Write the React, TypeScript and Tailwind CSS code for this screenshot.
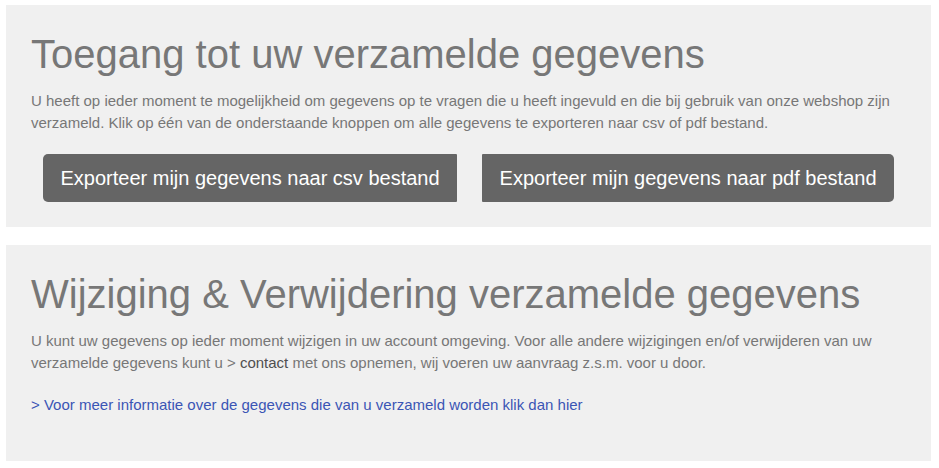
export default function App() {
  return (
    <main className="flex flex-col gap-[18px] bg-white pt-[5px] pr-2 pb-[7px] pl-[6px] font-['Liberation_Sans',Arial,sans-serif] text-[15px] leading-[22px] text-[#777777]">
      <section className="bg-[#f0f0f0] p-[25px]">
        <h1 className="text-[40px] leading-[48px]">Toegang tot uw verzamelde gegevens</h1>
        <p className="mt-3">
          U heeft op ieder moment te mogelijkheid om gegevens op te vragen die u heeft ingevuld en die bij gebruik van onze webshop zijn verzameld. Klik op één van de onderstaande knoppen om alle gegevens te exporteren naar csv of pdf bestand.
        </p>
        <div className="mt-5 flex flex-wrap gap-x-[25px] gap-y-3 px-3">
          <button type="button" className="min-h-12 grow rounded-l-[5px] rounded-r-[1px] bg-[#656565] px-4 text-[20px] text-white">
            Exporteer mijn gegevens naar csv bestand
          </button>
          <button type="button" className="min-h-12 grow rounded-l-[1px] rounded-r-[5px] bg-[#656565] px-4 text-[20px] text-white">
            Exporteer mijn gegevens naar pdf bestand
          </button>
        </div>
      </section>
      <section className="bg-[#f0f0f0] px-[25px] pt-[25px] pb-[45px]">
        <h1 className="text-[40px] leading-[48px]">Wijziging &amp; Verwijdering verzamelde gegevens</h1>
        <p className="mt-3">
          U kunt uw gegevens op ieder moment wijzigen in uw account omgeving. Voor alle andere wijzigingen en/of verwijderen van uw verzamelde gegevens kunt u &gt; <a href="#contact" className="text-[#4f4f4f]">contact</a> met ons opnemen, wij voeren uw aanvraag z.s.m. voor u door.
        </p>
        <p className="mt-5">
          <a href="#informatie" className="text-[#3b55b5]">&gt; Voor meer informatie over de gegevens die van u verzameld worden klik dan hier</a>
        </p>
      </section>
    </main>
  );
}
